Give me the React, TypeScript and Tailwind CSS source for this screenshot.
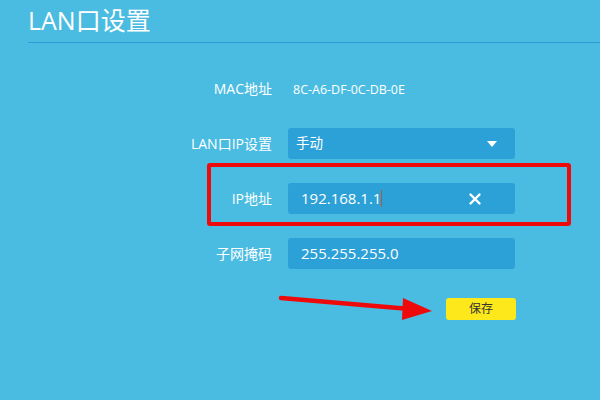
import { X } from "lucide-react";

const cjk = { fontFamily: '"Open Sans", "Noto Sans CJK SC", sans-serif' };

function Row({ label, children, className = "" }: { label: string; children: React.ReactNode; className?: string }) {
  return (
    <div className={`flex items-center ${className}`}>
      <div className="w-[272px] text-right text-[14px] text-white">{label}</div>
      <div className="ml-4 w-[227px]">{children}</div>
    </div>
  );
}

export default function App() {
  return (
    <div className="relative h-[400px] w-[600px] overflow-hidden bg-[#4bbce1]" style={cjk}>
      <div className="pl-7 pt-[5px]">
        <h1 className="text-[25px] leading-[30px] font-normal text-white">LAN口设置</h1>
        <div className="mt-[7px] h-px bg-[#2a9bd6]" />
      </div>

      <div className="flex flex-col">
        <Row label="MAC地址" className="mt-[35px] h-[20px]">
          <span className="pl-[5px] text-[12.5px] text-white">8C-A6-DF-0C-DB-0E</span>
        </Row>

        <Row label="LAN口IP设置" className="mt-[30px]">
          <div className="flex h-[31px] items-center justify-between rounded-[3px] bg-[#2ca1d8] pl-[8px] pr-[18px] text-[13.5px] text-white">
            <span>手动</span>
            <svg width="10" height="6" viewBox="0 0 10 6">
              <path d="M0 0 L10 0 L5 6 Z" fill="white" />
            </svg>
          </div>
        </Row>

        <Row label="IP地址" className="mt-[24px]">
          <div className="flex h-[31px] items-center rounded-[3px] bg-[#2ca1d8] pl-[13px] text-[15px] text-white">
            <span>192.168.1.1</span>
            <span className="h-[17px] w-px bg-[#b05a3c]" />
            <X className="ml-[84px] text-white" size={18} strokeWidth={3.2} />
          </div>
        </Row>

        <Row label="子网掩码" className="mt-[24px]">
          <div className="flex h-[31px] items-center rounded-[3px] bg-[#2ca1d8] pl-[13px] text-[15px] text-white">
            255.255.255.0
          </div>
        </Row>

        <div className="mt-[29px] flex">
          <div className="ml-[446px] flex h-[22px] w-[70px] items-center justify-center rounded-[3px] bg-[#fde91b] text-[12px] text-[#333]">
            保存
          </div>
        </div>
      </div>

      <div className="absolute left-[207px] top-[163px] h-[63px] w-[364px] rounded-[3px] border-4 border-[#ee0a0a]" />

      <svg className="absolute left-0 top-0" width="600" height="400">
        <line x1="281" y1="298" x2="410" y2="309" stroke="#ee0a0a" strokeWidth="4.5" strokeLinecap="round" />
        <path d="M403 298 L432 311 L402 320 Z" fill="#ee0a0a" />
      </svg>
    </div>
  );
}
